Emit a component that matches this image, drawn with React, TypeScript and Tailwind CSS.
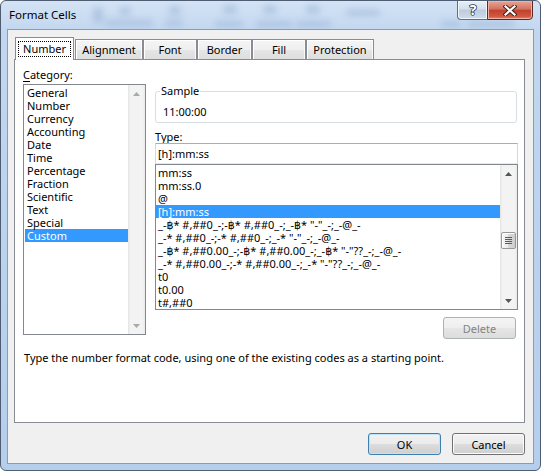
import React from "react";

const CATEGORIES = [
  "General",
  "Number",
  "Currency",
  "Accounting",
  "Date",
  "Time",
  "Percentage",
  "Fraction",
  "Scientific",
  "Text",
  "Special",
  "Custom",
];

const TYPES = [
  "mm:ss",
  "mm:ss.0",
  "@",
  "[h]:mm:ss",
  '_-฿* #,##0_-;-฿* #,##0_-;_-฿* "-"_-;_-@_-',
  '_-* #,##0_-;-* #,##0_-;_-* "-"_-;_-@_-',
  '_-฿* #,##0.00_-;-฿* #,##0.00_-;_-฿* "-"??_-;_-@_-',
  '_-* #,##0.00_-;-* #,##0.00_-;_-* "-"??_-;_-@_-',
  "t0",
  "t0.00",
  "t#,##0",
];

const TABS = [
  { label: "Alignment", cls: "ml-px w-[68px]" },
  { label: "Font", cls: "w-[54px]" },
  { label: "Border", cls: "w-[55px]" },
  { label: "Fill", cls: "w-[54px]" },
  { label: "Protection", cls: "w-[68px]" },
];

// blurred ribbon bits showing through the glass frame
const BLOBS = [
  "left-[92px] top-[6px] w-[10px] h-[16px]",
  "left-[104px] top-[19px] w-[48px] h-[6px]",
  "left-[118px] top-[6px] w-[12px] h-[8px]",
  "left-[164px] top-[19px] w-[18px] h-[6px]",
  "left-[168px] top-[5px] w-[12px] h-[9px]",
  "left-[214px] top-[20px] w-[28px] h-[6px]",
  "left-[222px] top-[4px] w-[14px] h-[9px]",
  "left-[255px] top-[20px] w-[36px] h-[6px]",
  "left-[262px] top-[4px] w-[14px] h-[9px]",
  "left-[295px] top-[20px] w-[35px] h-[6px]",
  "left-[305px] top-[4px] w-[14px] h-[9px]",
  "left-[345px] top-[8px] w-[34px] h-[7px]",
  "left-[440px] top-[20px] w-[20px] h-[6px]",
  "left-[466px] top-[20px] w-[48px] h-[6px]",
];

function Arrow({ dir, dim }: { dir: "up" | "down"; dim?: boolean }) {
  return (
    <div className="flex h-[17px] items-center justify-center">
      <svg width="7" height="4" viewBox="0 0 7 4">
        <path
          d={dir === "up" ? "M0 4L3.5 0L7 4Z" : "M0 0L7 0L3.5 4Z"}
          fill={dim ? "#a9a9a9" : "#555555"}
        />
      </svg>
    </div>
  );
}

function ScrollBar({ thumbAt }: { thumbAt?: number }) {
  return (
    <div className="flex w-[17px] flex-col bg-[linear-gradient(90deg,#e4e4e4,#f3f3f3_15%,#f3f3f3_85%,#e9e9e9)]">
      <Arrow dir="up" dim={thumbAt === undefined} />
      <div className="flex-1">
        {thumbAt !== undefined && (
          <div
            className="mx-px flex h-[17px] items-center justify-center rounded-[2px] border border-[#979797] bg-[linear-gradient(90deg,#f6f6f6,#e9e9e9_50%,#d9d9d9_50%,#cdcdcd)] shadow-[inset_1px_1px_0_#fff]"
            style={{ marginTop: thumbAt }}
          >
            <svg width="7" height="7" viewBox="0 0 7 7">
              {[0, 2, 4, 6].map((y) => (
                <rect key={y} x="0" y={y} width="7" height="1" fill="#5b5b5b" />
              ))}
            </svg>
          </div>
        )}
      </div>
      <Arrow dir="down" dim={thumbAt === undefined} />
    </div>
  );
}

function Button({
  children,
  primary,
  disabled,
  className = "",
}: {
  children: React.ReactNode;
  primary?: boolean;
  disabled?: boolean;
  className?: string;
}) {
  const look = disabled
    ? "border-[#adb2b5] bg-[linear-gradient(180deg,#f4f4f4,#eeeeee_50%,#e6e6e6_50%,#dcdcdc)] text-[#838383]"
    : primary
      ? "border-[#3c7fb1] bg-[linear-gradient(180deg,#f2f2f2,#ebebeb_50%,#dddddd_50%,#cfcfcf)] shadow-[inset_0_0_0_1px_#bfe4f9]"
      : "border-[#707070] bg-[linear-gradient(180deg,#f2f2f2,#ebebeb_50%,#dddddd_50%,#cfcfcf)] shadow-[inset_0_0_0_1px_#fbfbfb]";
  return (
    <div
      className={`flex h-[22px] w-[73px] items-center justify-center rounded-[3px] border leading-[13px] ${look} ${className}`}
    >
      {children}
    </div>
  );
}

function TitleBar() {
  return (
    <div className="relative flex h-[28px] items-start">
      <div className="pointer-events-none absolute inset-0 overflow-hidden">
        {BLOBS.map((b) => (
          <div key={b} className={`absolute rounded-[3px] bg-[#7f9ec6] opacity-35 blur-[3px] ${b}`} />
        ))}
      </div>
      <span className="relative ml-[8px] mt-[7px] text-[11.5px] leading-[14px]">Format Cells</span>
      <div className="relative -mt-px ml-auto mr-[7px] flex">
        <div className="flex h-[20px] w-[30px] items-center justify-center rounded-bl-[4px] border border-r-0 border-[#5b6f8a] bg-[linear-gradient(180deg,#e9f0f8,#d3dfec_45%,#bccbdd_50%,#cfdced)] shadow-[inset_0_0_0_1px_#f2f6fb]">
          <svg width="14" height="18" viewBox="0 0 14 18">
            <text
              x="7"
              y="14"
              textAnchor="middle"
              fontFamily="Noto Sans, sans-serif"
              fontWeight="700"
              fontSize="14"
              fill="#ffffff"
              stroke="#2e3a4b"
              strokeWidth="1.6"
              paintOrder="stroke"
            >
              ?
            </text>
          </svg>
        </div>
        <div className="flex h-[20px] w-[46px] items-center justify-center rounded-br-[4px] border border-[#5b2a24] bg-[linear-gradient(180deg,#e8a596,#d2725f_45%,#c2412f_52%,#d2573f_85%,#e48a63)] shadow-[inset_0_0_0_1px_#eeb3a6]">
          <svg width="14" height="11" viewBox="0 0 14 11">
            <path d="M2.5 1.5L11.5 9.5M11.5 1.5L2.5 9.5" stroke="#3a1f1a" strokeWidth="4" strokeLinecap="square" />
            <path d="M2.5 1.5L11.5 9.5M11.5 1.5L2.5 9.5" stroke="#ffffff" strokeWidth="2.2" strokeLinecap="square" />
          </svg>
        </div>
      </div>
    </div>
  );
}

function Tabs() {
  return (
    <div className="relative z-10 flex h-[22px] items-end pl-px">
      <div className="-mb-px flex h-[23px] w-[59px] items-start justify-center border border-b-0 border-[#898c95] bg-white pt-[3px]">
        <span className="border border-dotted border-black px-[4px] leading-[14px]">Number</span>
      </div>
      {TABS.map((t) => (
        <div
          key={t.label}
          className={`flex h-[20px] items-center justify-center border border-b-0 border-[#898c95] bg-[linear-gradient(180deg,#f5f5f5,#efefef_50%,#e6e6e6_50%,#dedede)] leading-[13px] shadow-[inset_1px_1px_0_#ffffff,inset_-1px_0_0_#fafafa] ${t.cls}`}
        >
          {t.label}
        </div>
      ))}
    </div>
  );
}

function Panel() {
  return (
    <div className="flex h-[364px] flex-col border border-[#898c95] bg-white pl-[8px] pt-[8px]">
      <div className="flex">
        {/* Category */}
        <div className="w-[123px]">
          <div className="mb-[3px] leading-[13px]">
            <span className="underline underline-offset-2">C</span>ategory:
          </div>
          <div className="flex h-[251px] border border-[#828790] bg-white">
            <div className="flex-1 pl-px pt-px">
              {CATEGORIES.map((c) => (
                <div
                  key={c}
                  className={`h-[13px] pl-[2px] leading-[13px] ${c === "Custom" ? "bg-[#3399ff] text-white" : ""}`}
                >
                  {c}
                </div>
              ))}
            </div>
            <ScrollBar />
          </div>
        </div>

        {/* Sample / Type */}
        <div className="ml-[9px] flex w-[363px] flex-col pt-[16px]">
          <fieldset className="mr-px rounded-[3px] border border-[#d5dfe5]">
            <legend className="ml-[4px] px-px leading-[14px]">Sample</legend>
            <div className="pb-[4px] pl-[7px] pt-[7px] leading-[13px]">11:00:00</div>
          </fieldset>
          <div className="mt-[7px] leading-[13px]">
            <span className="underline underline-offset-2">T</span>ype:
          </div>
          <div className="flex h-[21px] items-center border border-[#abadb3] border-b-[#e3e9ef] border-x-[#d5d8de] pl-[2px] leading-[13px]">
            [h]:mm:ss
          </div>
          <div className="flex h-[146px] border border-[#828790] bg-white">
            <div className="flex-1 pt-px">
              {TYPES.map((t) => (
                <div
                  key={t}
                  className={`h-[13px] whitespace-pre pl-[2px] leading-[13px] ${t === "[h]:mm:ss" ? "bg-[#3399ff] text-white" : ""}`}
                >
                  {t}
                </div>
              ))}
            </div>
            <ScrollBar thumbAt={50} />
          </div>
          <Button disabled className="ml-auto mr-[2px] mt-[7px]">
            Delete
          </Button>
        </div>
      </div>
      <div className="ml-px mt-[12px] leading-[13px]">
        Type the number format code, using one of the existing codes as a starting point.
      </div>
    </div>
  );
}

export default function App() {
  return (
    <div className="h-[471px] w-[541px] bg-white font-['Noto_Sans','DejaVu_Sans',sans-serif] text-[11px] text-black">
      <div className="relative flex h-full flex-col overflow-hidden rounded-[6px] border border-[#4e5d71] bg-[linear-gradient(180deg,#d4e3f5_0%,#c2d7ef_30px,#b5ceec_100%)]">
        <TitleBar />
        <div className="mx-[6px] mb-[6px] flex flex-1 flex-col border border-[#8a9cb4] bg-[#f0f0f0] pl-[6px] pr-[8px] pt-[7px]">
          <Tabs />
          <Panel />
          <div className="mt-[10px] flex justify-end gap-[11px]">
            <Button primary>OK</Button>
            <Button>Cancel</Button>
          </div>
        </div>
      </div>
    </div>
  );
}
